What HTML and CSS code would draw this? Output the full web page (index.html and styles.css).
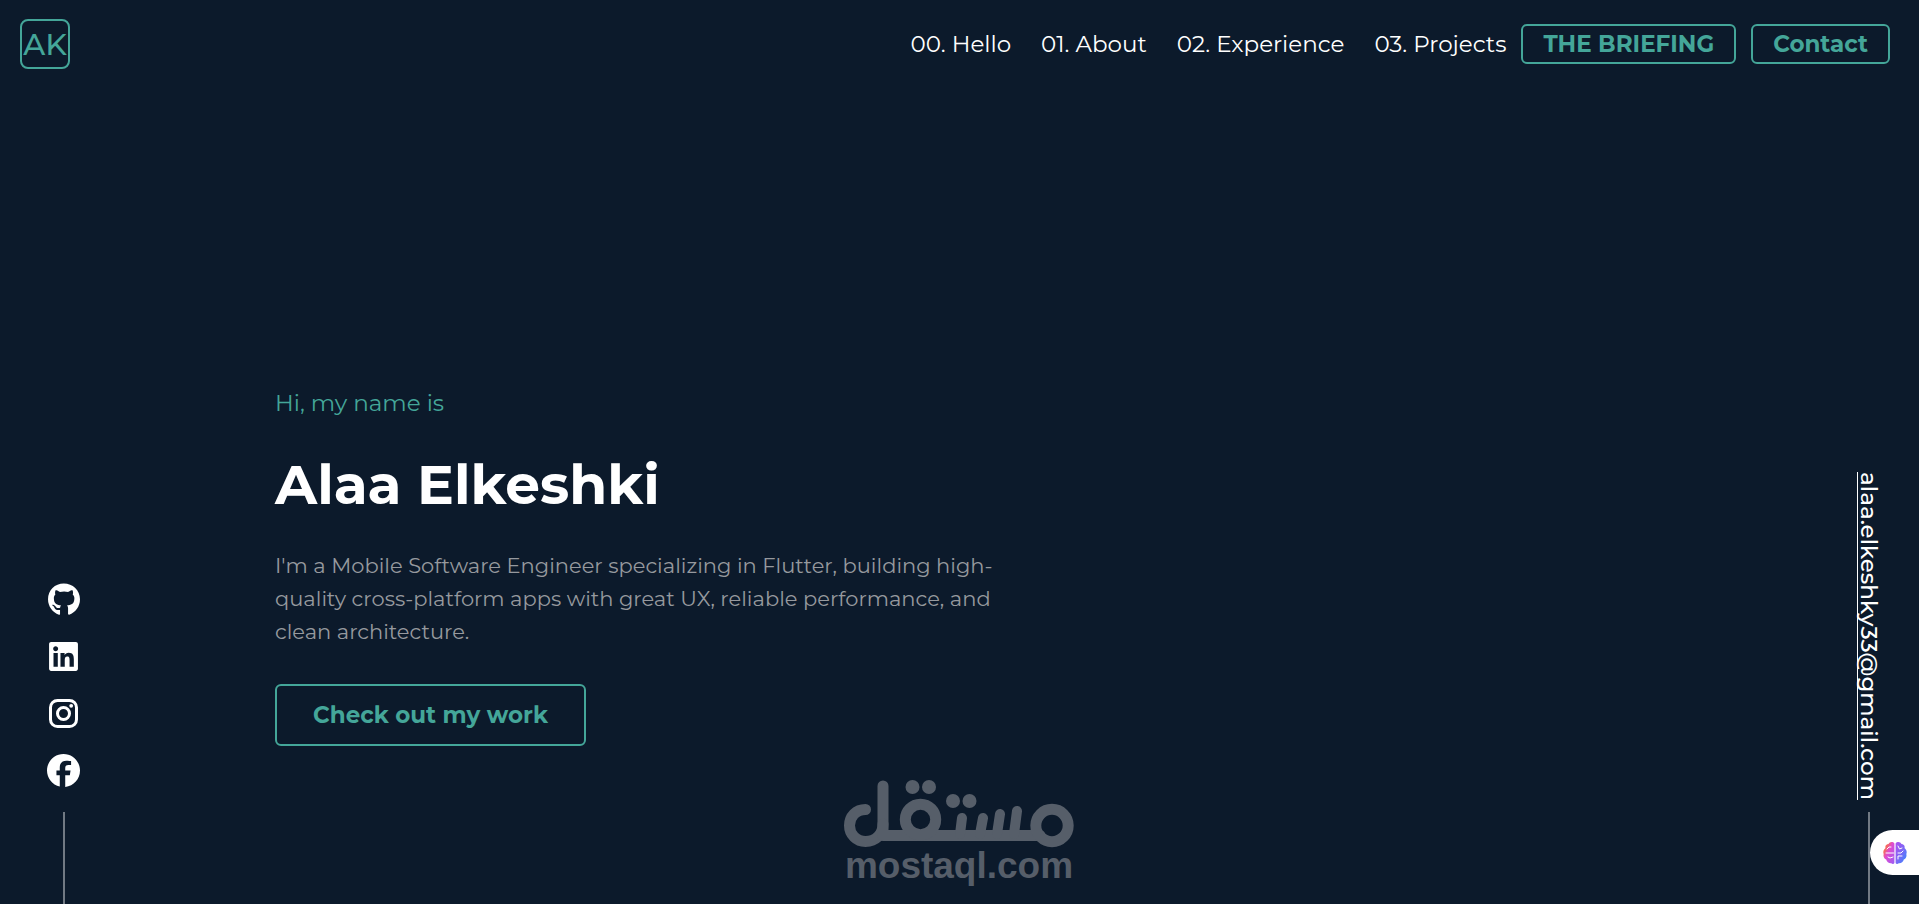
FILE: index.html
```
<!DOCTYPE html>
<html lang="en">
<head>
<meta charset="utf-8">
<meta name="viewport" content="width=device-width, initial-scale=1">
<title>Alaa Elkeshki</title>
<link rel="stylesheet" href="styles.css">
</head>
<body>
<header class="header">
  <a class="logo" href="#hello">AK</a>
  <nav class="nav">
    <a class="nav-link" href="#hello">00. Hello</a>
    <a class="nav-link" href="#about">01. About</a>
    <a class="nav-link" href="#experience">02. Experience</a>
    <a class="nav-link" href="#projects">03. Projects</a>
    <div class="nav-actions">
      <button class="btn btn-nav" type="button">THE BRIEFING</button>
      <button class="btn btn-nav" type="button">Contact</button>
    </div>
  </nav>
</header>

<main class="hero" id="hello">
  <p class="greeting">Hi, my name is</p>
  <h1 class="name">Alaa Elkeshki</h1>
  <p class="intro">I'm a Mobile Software Engineer specializing in Flutter, building high-quality cross-platform apps with great UX, reliable performance, and clean architecture.</p>
  <button class="btn btn-work" type="button">Check out my work</button>
</main>

<aside class="rail rail-left">
  <a class="social" href="#github" aria-label="GitHub"><svg width="32" height="33" viewBox="0 0 496 512"><path d="M244.800 8C106.100 8 0 113.300 0 252c0 110.900 69.800 205.800 169.500 239.200 12.800 2.300 17.300-5.600 17.300-12.100 0-6.200-.3-40.400-.3-61.400 0 0-70 15-84.700-29.800 0 0-11.400-29.100-27.800-36.600 0 0-22.900-15.700 1.600-15.400 0 0 24.900 2 38.600 25.800 21.900 38.600 58.600 27.500 72.900 20.900 2.300-16 8.800-27.100 16-33.700-55.900-6.200-112.300-14.300-112.300-110.500 0-27.500 7.600-41.300 23.600-58.900-2.600-6.500-11.100-33.300 2.600-67.900 20.900-6.500 69 27 69 27 20-5.600 41.500-8.500 62.800-8.500s42.800 2.900 62.800 8.500c0 0 48.100-33.600 69-27 13.700 34.700 5.200 61.400 2.600 67.900 16 17.700 25.800 31.500 25.800 58.900 0 96.500-58.900 104.200-114.800 110.500 9.200 7.900 17 22.900 17 46.400 0 33.700-.3 75.400-.3 83.600 0 6.500 4.600 14.400 17.300 12.100C428.200 457.800 496 362.900 496 252 496 113.300 383.500 8 244.800 8z"/></svg></a>
  <a class="social" href="#linkedin" aria-label="LinkedIn"><svg width="29" height="33" viewBox="0 0 448 512"><path d="M416 32H31.900C14.300 32 0 46.500 0 64.300v383.400C0 465.500 14.300 480 31.900 480H416c17.600 0 32-14.500 32-32.300V64.300c0-17.800-14.400-32.300-32-32.300zM135.400 416H69V202.200h66.500V416zm-33.200-243c-21.300 0-38.500-17.300-38.500-38.500S80.900 96 102.200 96c21.200 0 38.500 17.300 38.500 38.500 0 21.300-17.200 38.500-38.500 38.500zm282.100 243h-66.400V312c0-24.800-.5-56.700-34.500-56.700-34.600 0-39.900 27-39.900 54.900V416h-66.400V202.200h63.700v29.200h.9c8.900-16.800 30.600-34.500 62.900-34.500 67.200 0 79.700 44.300 79.700 101.900V416z"/></svg></a>
  <a class="social" href="#instagram" aria-label="Instagram"><svg width="29" height="29" viewBox="0 0 29 29"><rect x="1.500" y="1.500" width="26" height="26" rx="7" fill="none" stroke="#fff" stroke-width="3"/><circle cx="14.500" cy="14.500" r="6" fill="none" stroke="#fff" stroke-width="3"/><circle cx="22.200" cy="6.800" r="1.900"/></svg></a>
  <a class="social" href="#facebook" aria-label="Facebook"><svg width="33" height="33" viewBox="8 8 496 496"><path d="M504 256C504 119 393 8 256 8S8 119 8 256c0 115 80 216 192 242V328h-50V256h50v-45c0-68 38-103 98-103 28 0 72 5 72 5v62h-38c-38 0-50 18-50 43V256h80l-11 72h-69V504C410 488 504 386 504 256z"/></svg></a>
  <span class="rail-line"></span>
</aside>

<aside class="rail rail-right">
  <a class="email" href="mailto:alaa.elkeshky33@gmail.com">alaa.elkeshky33@gmail.com</a>
  <span class="rail-line"></span>
</aside>

<div class="watermark">
  <svg width="230" height="68" viewBox="0 0 230 68" fill="none" stroke="#565e69" stroke-width="11" stroke-linecap="round" aria-hidden="true">
    <path d="M21.500 29.500C12 29.500 5.500 36.500 5.500 45.500C5.500 54.500 12.500 61.500 21.500 61.500C31.500 61.500 39 54.500 39 44V6"/>
    <path d="M39 55.500H196M39 44V55"/>
    <circle cx="76.500" cy="39.500" r="15.200"/>
    <path d="M118 38L116 54M139 38L136 54M156 34L153 54M173 31L170 54" stroke-width="10"/>
    <circle cx="208" cy="45.500" r="16.200"/>
    <g fill="#565e69" stroke="none">
      <circle cx="68.500" cy="7" r="7"/><circle cx="85" cy="7" r="7"/>
      <circle cx="109" cy="21" r="7"/><circle cx="125.500" cy="21" r="7"/>
    </g>
  </svg>
  <span class="watermark-text">mostaql.com</span>
</div>

<button class="assistant" type="button" aria-label="Assistant">
  <svg width="24" height="24" viewBox="0 0 24 24">
    <defs>
      <linearGradient id="brain-left" x1="0" y1="0" x2="1" y2="1"><stop offset="0" stop-color="#ff8a3d"/><stop offset=".25" stop-color="#f5695e"/><stop offset=".45" stop-color="#e04bd0"/><stop offset="1" stop-color="#9a5cf5"/></linearGradient>
      <linearGradient id="brain-right" x1="0" y1="0" x2="1" y2="1"><stop offset="0" stop-color="#b050ee"/><stop offset=".5" stop-color="#7d68f5"/><stop offset="1" stop-color="#2f8cff"/></linearGradient>
    </defs>
    <path fill="url(#brain-left)" d="M11.400 2.500C10 .2 6.500.6 5.500 3 3.300 3 1.800 5 2.500 7 .5 8.500-.2 11 .7 13c-.7 2.500.5 4.800 2.500 5.500.5 2.600 3 4 5 3.700 1.200 1.200 2.700.9 3.200-.2z"/>
    <path fill="url(#brain-right)" d="M12.600 2.500C14 .2 17.500.6 18.500 3c2.200 0 3.700 2 3 4 2 1.500 2.700 4 1.800 6 .7 2.500-.5 4.800-2.500 5.500-.5 2.600-3 4-5 3.700-1.200 1.200-2.700.9-3.200-.2z"/>
    <path fill="none" stroke="#fff" stroke-width="1" stroke-linecap="round" d="M4 8l2-2h2M3 12h7.500M5 16l2 1 3-1M15 5l1.500 3L19 7M15 12h3l2-2M15 18v-3h4"/>
  </svg>
</button>
</body>
</html>
```
FILE: styles.css
```
* { box-sizing: border-box; }

body {
  margin: 0;
  min-height: 100vh;
  display: flex;
  flex-direction: column;
  overflow: hidden;
  background: #0c1a2b;
  color: #fff;
  font-family: "Montserrat", Inter, sans-serif;
}

a { color: inherit; text-decoration: none; }

.header {
  display: flex;
  align-items: center;
  justify-content: space-between;
  padding: 19px 29px 19px 20px;
}

.logo {
  display: flex;
  align-items: center;
  justify-content: center;
  width: 50px;
  height: 50px;
  border: 2px solid #44a699;
  border-radius: 8px;
  color: #44a699;
  font-size: 30px;
  font-weight: 500;
}

.nav { display: flex; align-items: center; gap: 30px; padding-bottom: 1px; font-size: 23px; }
.nav-link { white-space: nowrap; }
.nav-actions { display: flex; gap: 15px; margin-left: -15px; }

.btn {
  border: 2px solid #44a699;
  border-radius: 6px;
  background: none;
  color: #44a699;
  font: 700 23px/28px "Montserrat", Inter, sans-serif;
  white-space: nowrap;
  cursor: pointer;
}
.btn-nav { padding: 4px 20px; }
.btn-work { padding: 15px 36px; }

.hero {
  flex: 1;
  padding: 301px 275px 0;
}
.greeting { margin: 0 0 35px; color: #44a699; font-size: 23px; line-height: 28px; }
.name { margin: 0 0 31px; font-size: 55px; font-weight: 700; line-height: 66px; }
.intro {
  max-width: 730px;
  margin: 0 0 36px;
  color: #96999e;
  font-size: 21px;
  line-height: 33px;
}

.rail {
  position: absolute;
  bottom: 0;
  display: flex;
  flex-direction: column;
  align-items: center;
}
.rail-left { left: 39px; width: 49px; }
.rail-right { right: 26px; width: 48px; }
.rail-line { width: 2px; height: 92px; background: #717983; }

.social {
  display: flex;
  align-items: center;
  justify-content: center;
  width: 49px;
  height: 57px;
  fill: #fff;
}
.rail-left .rail-line { margin-top: 13px; }

.email {
  writing-mode: vertical-rl;
  margin-bottom: 12px;
  font-size: 23px;
  font-weight: 500;
  line-height: 28px;
  text-decoration: underline 1px;
  text-decoration-skip-ink: none;
  text-underline-offset: -1px;
}

.watermark {
  position: absolute;
  bottom: 21px;
  left: 0;
  right: 0;
  display: flex;
  flex-direction: column;
  align-items: center;
  padding-right: 1px;
  pointer-events: none;
}
.watermark-text {
  color: #565e69;
  font: 700 37px/35px "Liberation Sans", Arial, sans-serif;
}

.assistant {
  position: absolute;
  right: 0;
  bottom: 29px;
  display: flex;
  align-items: center;
  width: 49px;
  height: 45px;
  padding: 0 0 0 13px;
  border: 0;
  border-radius: 23px 0 0 23px;
  background: #fff;
}
```
